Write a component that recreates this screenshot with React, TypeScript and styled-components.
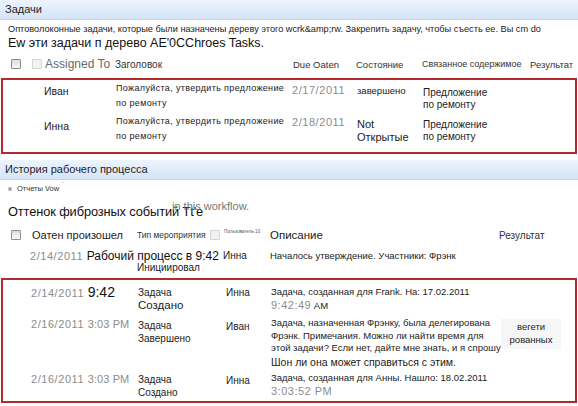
import React from 'react';
import styled, { createGlobalStyle } from 'styled-components';

const Global = createGlobalStyle`
  *, *::before, *::after {
    box-sizing: border-box;
  }
  html, body {
    margin: 0;
    padding: 0;
    background: #fff;
  }
  body {
    width: 578px;
    height: 406px;
    overflow: hidden;
    font-family: "Liberation Sans", Arial, sans-serif;
    color: #222;
  }
`;

const Page = styled.div`
  display: flex;
  flex-direction: column;
`;

const Bar = styled.div<{ $top?: number }>`
  height: 20px;
  line-height: 19px;
  margin-top: ${(p) => p.$top ?? 0}px;
  padding-left: 5px;
  font-size: 11px;
  color: #1e1e1e;
  background: linear-gradient(#edf4fd, #d5e4f7);
  border-bottom: 1px solid #c3d3e8;
`;

const Intro = styled.div`
  padding: 3px 8px 0;
`;

const IntroSmall = styled.div`
  font-size: 9.2px;
  line-height: 13px;
  color: #222;
  white-space: nowrap;
`;

const IntroBig = styled.div`
  font-size: 12.5px;
  line-height: 14px;
  color: #111;
`;

const Grid = styled.div<{ $cols: string; $h?: number; $top?: number; $pad?: number }>`
  display: grid;
  grid-template-columns: ${(p) => p.$cols};
  align-items: start;
  ${(p) => (p.$h ? `height: ${p.$h}px;` : '')}
  margin-top: ${(p) => p.$top ?? 0}px;
  padding-top: ${(p) => p.$pad ?? 0}px;
`;

const HeadGrid = styled(Grid)`
  align-items: center;
`;

const Check = styled.span<{ $faded?: boolean; $shift?: number }>`
  display: inline-block;
  flex: none;
  width: 10px;
  height: 10px;
  margin-left: ${(p) => p.$shift ?? 0}px;
  border: 1px solid ${(p) => (p.$faded ? '#d6d6d6' : '#8e8e8e')};
  background: ${(p) => (p.$faded ? '#f2f2f2' : 'linear-gradient(#dcdcdc, #fafafa)')};
  border-radius: 1px;
`;

const HeadCell = styled.div<{ $size?: number; $pad?: number; $color?: string }>`
  display: flex;
  align-items: center;
  gap: 3px;
  padding-left: ${(p) => p.$pad ?? 0}px;
  font-size: ${(p) => p.$size ?? 9.5}px;
  color: ${(p) => p.$color ?? '#333'};
  white-space: nowrap;
`;

const Frame = styled.div<{ $h: number; $top?: number }>`
  margin: ${(p) => p.$top ?? 0}px 1px 0;
  height: ${(p) => p.$h}px;
  border: 2px solid #b3292d;
`;

const Cell = styled.div<{ $pad?: number; $size?: number; $lh?: number; $left?: number }>`
  padding-top: ${(p) => p.$pad ?? 0}px;
  padding-left: ${(p) => p.$left ?? 0}px;
  font-size: ${(p) => p.$size ?? 10}px;
  line-height: ${(p) => p.$lh ?? 13}px;
  color: #222;
  white-space: nowrap;
`;

const TitleCell = styled(Cell)`
  letter-spacing: 0.35px;
`;

const DateCell = styled(Cell)`
  color: #8c8c8c;
  letter-spacing: 0.55px;
`;

const Time = styled.span`
  letter-spacing: 0.1px;
`;

const Big = styled.span<{ $size?: number }>`
  font-size: ${(p) => p.$size ?? 14}px;
  color: #111;
  letter-spacing: 0;
`;

const Grey = styled.span`
  color: #8c8c8c;
  font-size: 11px;
  letter-spacing: 0.5px;
`;

const Desc = styled(Cell)`
  font-size: 9.5px;
  line-height: 12.5px;
`;

const DescBig = styled.div`
  font-size: 10.5px;
  line-height: 15px;
`;

const ResultBox = styled.div`
  margin: 2px 14px 0 1px;
  padding: 1px 0 3px;
  background: #f6f6f6;
  text-align: center;
  font-size: 9.5px;
  line-height: 13px;
`;

const Reports = styled.div`
  display: flex;
  align-items: center;
  gap: 5px;
  padding: 4px 0 0 8px;
  font-size: 7.5px;
  line-height: 10px;
  color: #333;
`;

const Bullet = styled.span`
  width: 4px;
  height: 4px;
  background: #9a9a9a;
  border: 1px solid #c8c8c8;
`;

const Tick = styled.span`
  color: #aaa;
  font-size: 7px;
  margin-top: -6px;
  margin-left: -3px;
`;

const Heading = styled.div`
  position: relative;
  margin-top: 9px;
  padding-left: 8px;
  font-size: 12.8px;
  letter-spacing: -0.1px;
  line-height: 18px;
  color: #111;
`;

const Overlay = styled.span`
  position: absolute;
  left: 172px;
  top: -6px;
  font-size: 11px;
  letter-spacing: 0;
  color: #777;
`;

const Tiny = styled.span`
  font-size: 4.6px;
  color: #555;
  margin-top: -7px;
  margin-left: 2px;
`;

const taskCols = (first: number) => `${first}px 85px 176px 65px 66px 108px 1fr`;
const wfCols = (first: number) => `${first}px 107px 86px 47px 229px 1fr`;

const tasks = [
  { who: 'Иван', due: '2/17/2011', state: ['завершено'], h: 33, whoPad: 4, datePad: 3, statePad: 4, relPad: 7, stateSize: 9.5, stateLh: 13 },
  { who: 'Инна', due: '2/18/2011', state: ['Not', 'Открытые'], h: 39, whoPad: 6, datePad: 2, statePad: 5, relPad: 6, stateSize: 11, stateLh: 13 },
];

const App: React.FC = () => {
  return (
    <Page>
      <Global />
      <Bar>Задачи</Bar>
      <Intro>
        <IntroSmall>
          Оптоволоконные задачи, которые были назначены дереву этого wcrk&amp;amp;rw. Закрепить задачу, чтобы съесть ее. Вы cm do
        </IntroSmall>
        <IntroBig>Ew эти задачи п дерево AE'0CChroes Tasks.</IntroBig>
      </Intro>

      <HeadGrid $cols={taskCols(30)} $h={20} $top={4}>
        <HeadCell $pad={11}><Check /></HeadCell>
        <HeadCell $pad={2} $size={12} $color="#6a6a6a"><Check $faded />Assigned To</HeadCell>
        <HeadCell $size={10}>Заголовок</HeadCell>
        <HeadCell $pad={2}>Due Oaten</HeadCell>
        <HeadCell>Состояние</HeadCell>
        <HeadCell $size={9}>Связанное содержимое</HeadCell>
        <HeadCell $size={9.5}>Результат</HeadCell>
      </HeadGrid>

      <Frame $h={76} $top={4}>
        {tasks.map((t) => (
          <Grid key={t.who} $cols={taskCols(28)} $h={t.h}>
            <div />
            <Cell $pad={t.whoPad} $size={10.5} $lh={14} $left={13}>{t.who}</Cell>
            <TitleCell $pad={1} $size={9} $lh={15}>
              Пожалуйста, утвердить предложение<br />по ремонту
            </TitleCell>
            <DateCell $pad={t.datePad} $size={11} $lh={14}>{t.due}</DateCell>
            <Cell $pad={t.statePad} $size={t.stateSize} $lh={t.stateLh}>
              {t.state.map((s) => <div key={s}>{s}</div>)}
            </Cell>
            <Cell $pad={t.relPad} $size={10} $lh={12}>
              Предложение<br />по ремонту
            </Cell>
            <div />
          </Grid>
        ))}
      </Frame>

      <Bar $top={6}>История рабочего процесса</Bar>
      <Reports>
        <Bullet />
        Отчеты Vow
        <Tick>‾</Tick>
      </Reports>
      <Heading>
        Оттенок фиброзных событий Tt'e
        <Overlay>in this workflow.</Overlay>
      </Heading>

      <HeadGrid $cols={wfCols(30)} $h={20} $top={4}>
        <HeadCell $pad={11}><Check /></HeadCell>
        <HeadCell $pad={2} $size={11} $color="#222">Оатен произошел</HeadCell>
        <HeadCell $size={8.5}>Тип мероприятия</HeadCell>
        <HeadCell $color="#222" style={{ gap: 2 }}>
          <Check $faded $shift={-13} />
          <Tiny>Пользователь 10</Tiny>
        </HeadCell>
        <HeadCell $size={11.5} $color="#222">Описание</HeadCell>
        <HeadCell $size={10}>Результат</HeadCell>
      </HeadGrid>

      <Grid $cols={wfCols(30)} $h={33} $pad={4}>
        <div />
        <DateCell $size={11} $lh={14}>
          2/14/2011 <Big $size={12}>Рабочий процесс в 9:42</Big>
        </DateCell>
        <Cell $pad={13} $size={10} $lh={12}>Инициировал</Cell>
        <Cell $pad={1} $size={10} $lh={12}>Инна</Cell>
        <Desc $pad={1}>Началось утверждение. Участники: Фрэнк</Desc>
        <div />
      </Grid>

      <Frame $h={125}>
        <Grid $cols={wfCols(28)} $h={37} $pad={5}>
          <div />
          <DateCell $size={11} $lh={14}>2/14/2011 <Big>9:42</Big></DateCell>
          <Cell $pad={1} $lh={13}>
            Задача<br /><span style={{ fontSize: 11.5 }}>Создано</span>
          </Cell>
          <Cell $pad={1} $lh={13} $left={2}>Инна</Cell>
          <Desc $pad={1}>
            Задача, созданная для Frank. На: 17.02.2011<br />
            <Grey>9:42:49</Grey> AM
          </Desc>
          <div />
        </Grid>
        <Grid $cols={wfCols(28)} $h={55}>
          <div />
          <DateCell $size={11} $lh={14}>2/16/2011 <Time>3:03 PM</Time></DateCell>
          <Cell $pad={3} $lh={12.5}>Задача<br />Завершено</Cell>
          <Cell $pad={3} $lh={13} $left={2}>Иван</Cell>
          <Desc>
            Задача, назначенная Фрэнку, была делегирована<br />
            Фрэнк. Примечания. Можно ли найти время для<br />
            этой задачи? Если нет, дайте мне знать, и я спрошу
            <DescBig>Шон ли она может справиться с этим.</DescBig>
          </Desc>
          <ResultBox>вегети<br />рованных</ResultBox>
        </Grid>
        <Grid $cols={wfCols(28)} $h={29}>
          <div />
          <DateCell $size={11} $lh={14}>2/16/2011 <Time>3:03 PM</Time></DateCell>
          <Cell $pad={2} $lh={12.5}>Задача<br />Создано</Cell>
          <Cell $pad={2} $lh={13} $left={2}>Инна</Cell>
          <Desc>
            Задача, созданная для Анны. Нашло: 18.02.2011<br />
            <Grey>3:03:52 PM</Grey>
          </Desc>
          <div />
        </Grid>
      </Frame>
    </Page>
  );
};

export default App;
